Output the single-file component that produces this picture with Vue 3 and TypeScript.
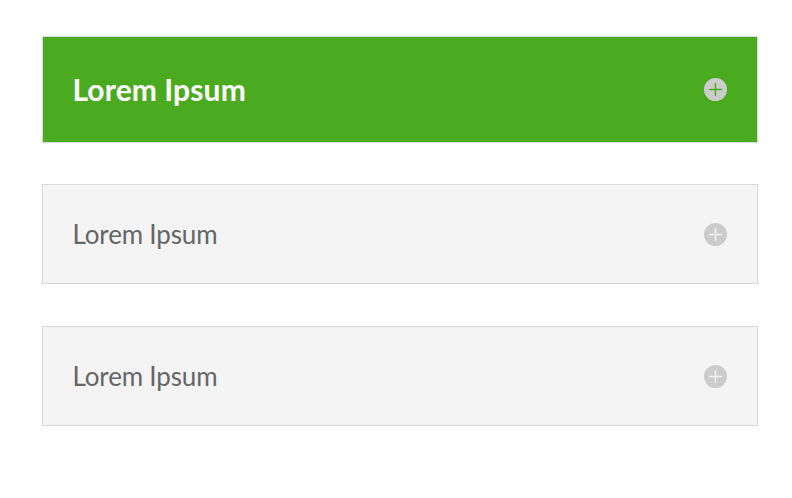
<script setup lang="ts">
interface Toggle {
  id: number
  title: string
  active: boolean
}

const toggles: Toggle[] = [
  { id: 1, title: 'Lorem Ipsum', active: true },
  { id: 2, title: 'Lorem Ipsum', active: false },
  { id: 3, title: 'Lorem Ipsum', active: false },
]
</script>

<template>
  <main class="accordion">
    <section v-for="item in toggles" :key="item.id" class="toggle" :class="{ active: item.active }">
      <h5 class="title">{{ item.title }}</h5>
      <svg class="icon" viewBox="0 0 23 23" aria-hidden="true">
        <path
          fill="#ccc"
          fill-rule="evenodd"
          d="M11.5 0a11.5 11.5 0 1 0 0 23a11.5 11.5 0 1 0 0-23zM11.5 4.9q.7 0 .7.7v5.2h5.2q.7 0 .7.7t-.7.7h-5.2v5.2q0 .7-.7.7t-.7-.7v-5.2H5.6q-.7 0-.7-.7t.7-.7h5.2V5.6q0-.7.7-.7z"
        />
      </svg>
    </section>
  </main>
</template>

<style>
body {
  margin: 0;
  background: #fff;
}
</style>

<style scoped>
.accordion {
  box-sizing: border-box;
  width: 792px;
  padding: 36px 34px 0 42px;
  display: flex;
  flex-direction: column;
  font-family: Lato, sans-serif;
}
.toggle {
  box-sizing: border-box;
  height: 100px;
  margin-bottom: 42px;
  padding: 1px 30px 0 29.4px;
  border: 1px solid #d9d9d9;
  background: #f4f4f4;
  color: #666;
  display: flex;
  align-items: center;
  justify-content: space-between;
}
.toggle.active {
  height: 107px;
  margin-bottom: 41px;
  padding-top: 0;
  background: #4bab20;
  color: #fff;
}
.title {
  margin: 0 0 1px;
  font-size: 26px;
  line-height: 26px;
  font-weight: 400;
  letter-spacing: -0.1px;
  word-spacing: -0.4px;
}
.active .title {
  margin: 0;
  font-size: 30px;
  line-height: 31px;
  font-weight: 700;
  letter-spacing: 0.16px;
}
.icon {
  width: 23px;
  height: 23px;
  flex: none;
}
</style>
